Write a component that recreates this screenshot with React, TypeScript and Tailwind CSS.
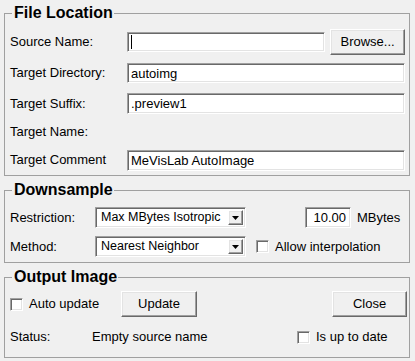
import React from 'react';

const sunken =
  'border border-t-[#a0a0a0] border-l-[#a0a0a0] border-b-white border-r-white shadow-[inset_1px_1px_0_#696969,inset_-1px_-1px_0_#e3e3e3] bg-white';
const raised =
  'border border-t-white border-l-white border-b-[#696969] border-r-[#696969] shadow-[inset_-1px_-1px_0_#a0a0a0,inset_1px_1px_0_#e3e3e3] bg-[#f0f0f0]';

const Group = ({
  title,
  className,
  children,
}: {
  title: string;
  className?: string;
  children: React.ReactNode;
}) => (
  <fieldset className={`border border-[#a0a0a0] min-w-0 ${className ?? ''}`}>
    <legend className="ml-[2px] pl-[2px] pr-px text-[16px] font-bold leading-[18px]">
      {title}
    </legend>
    {children}
  </fieldset>
);

const TextField = ({ value, className }: { value: string; className?: string }) => (
  <div className={`${sunken} flex items-center pl-[3px] ${className ?? ''}`}>
    <span className="leading-none">{value}</span>
  </div>
);

const Button = ({ label, className }: { label: string; className?: string }) => (
  <button className={`${raised} flex items-center justify-center h-[26px] ${className ?? ''}`}>
    {label}
  </button>
);

const Combo = ({ value }: { value: string }) => (
  <div className={`${sunken} w-[151px] h-[21px] flex items-center p-[2px]`}>
    <span className="flex-1 pl-[3px] text-[12.5px] leading-none whitespace-nowrap overflow-hidden">
      {value}
    </span>
    <div className={`${raised} w-[15px] h-full flex items-center justify-center`}>
      <svg width="7" height="4" viewBox="0 0 7 4">
        <path d="M0 0h7L3.5 4z" fill="#000" />
      </svg>
    </div>
  </div>
);

const Check = ({ label, className }: { label: string; className?: string }) => (
  <div className={`flex items-center ${className ?? ''}`}>
    <div className={`${sunken} w-[13px] h-[13px]`} />
    <span className="ml-[6px]">{label}</span>
  </div>
);

export default function App() {
  return (
    <div className="w-[415px] h-[361px] bg-[#f0f0f0] pt-[4px] pl-[4px] pr-[5px] text-[13px] text-black font-['Liberation_Sans',Arial,sans-serif] overflow-hidden">
      <Group title="File Location" className="pt-[6px] pb-[2px] pl-[5px] pr-[4px]">
        <div className="flex items-center h-[28px]">
          <span className="w-[117px]">Source Name:</span>
          <div className={`${sunken} w-[199px] h-[20px] flex items-center pl-[3px]`}>
            <div className="w-px h-[14px] bg-black" />
          </div>
          <Button label="Browse..." className="ml-[5px] w-[75px]" />
        </div>
        <div className="flex items-center h-[34px]">
          <span className="w-[117px]">Target Directory:</span>
          <TextField value="autoimg" className="flex-1 h-[20px]" />
        </div>
        <div className="flex items-center h-[27px]">
          <span className="w-[117px]">Target Suffix:</span>
          <TextField value=".preview1" className="flex-1 h-[21px]" />
        </div>
        <div className="flex items-center h-[30px]">
          <span className="w-[117px]">Target Name:</span>
        </div>
        <div className="flex items-center h-[26px]">
          <span className="w-[117px]">Target Comment</span>
          <TextField value="MeVisLab AutoImage" className="flex-1 h-[21px]" />
        </div>
      </Group>

      <Group title="Downsample" className="mt-[5px] pt-[4px] pb-px pl-[5px] pr-[4px]">
        <div className="flex items-center h-[29px]">
          <span className="w-[85px]">Restriction:</span>
          <Combo value="Max MBytes Isotropic" />
          <div className={`${sunken} ml-[59px] w-[46px] h-[21px] flex items-center justify-end pr-[4px]`}>
            <span className="leading-none">10.00</span>
          </div>
          <span className="ml-[6px]">MBytes</span>
        </div>
        <div className="flex items-center h-[29px]">
          <span className="w-[85px]">Method:</span>
          <Combo value="Nearest Neighbor" />
          <Check label="Allow interpolation" className="ml-[10px]" />
        </div>
      </Group>

      <Group title="Output Image" className="mt-[5px] pt-[5px] pl-[5px] pr-[2px]">
        <div className="flex items-center h-[26px]">
          <Check label="Auto update" className="w-[111px]" />
          <Button label="Update" className="w-[76px]" />
          <div className="flex-1" />
          <Button label="Close" className="w-[75px]" />
        </div>
        <div className="flex items-center h-[40px]">
          <span className="w-[82px]">Status:</span>
          <span className="w-[205px]">Empty source name</span>
          <Check label="Is up to date" />
        </div>
      </Group>
    </div>
  );
}
